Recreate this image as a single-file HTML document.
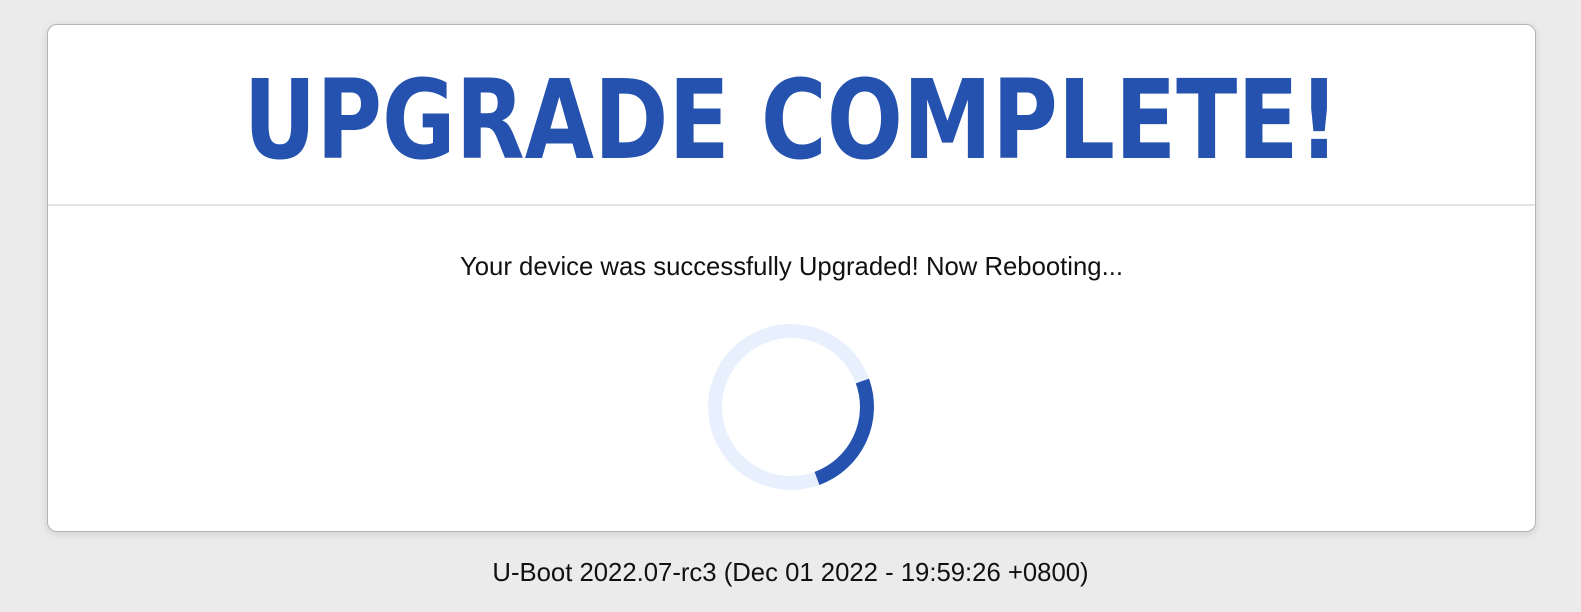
<!DOCTYPE html>
<html><head><meta charset="utf-8"><style>
html,body{margin:0;padding:0;width:1581px;height:612px;background:#ebebeb;overflow:hidden;font-family:"Liberation Sans",Arial,sans-serif}
.card{position:absolute;left:47px;top:24px;width:1487px;height:506px;background:#fff;border:1px solid #b5b5b5;border-radius:10px;box-shadow:0 2px 8px rgba(0,0,0,.12)}
.title{position:absolute;left:0;width:1487px;top:40px;text-align:center;font-family:"DejaVu Sans",Verdana,sans-serif;font-weight:bold;font-size:110px;line-height:110px;color:#2452ae;transform:scaleX(0.815);transform-origin:center}
.hr{position:absolute;left:0;top:179px;width:1487px;height:2px;background:#e3e3e3}
.msg{position:absolute;left:0;width:1487px;top:228px;text-align:center;font-size:25.7px;color:#111}
.foot{position:absolute;left:0;width:1581px;top:559px;text-align:center;font-size:25.7px;color:#111}
svg{position:absolute;left:700px;top:316px}
</style></head><body>
<div class="card">
<div class="title">UPGRADE COMPLETE!</div>
<div class="hr"></div>
<div class="msg">Your device was successfully Upgraded! Now Rebooting...</div>
</div>
<svg width="182" height="182" viewBox="0 0 182 182">
<circle cx="91" cy="91" r="76" fill="none" stroke="#e8f0fd" stroke-width="14"/>
<path d="M162.4 65 A76 76 0 0 1 117 162.4" fill="none" stroke="#2452ae" stroke-width="14"/>
</svg>
<div class="foot">U-Boot 2022.07-rc3 (Dec 01 2022 - 19:59:26 +0800)</div>
</body></html>
